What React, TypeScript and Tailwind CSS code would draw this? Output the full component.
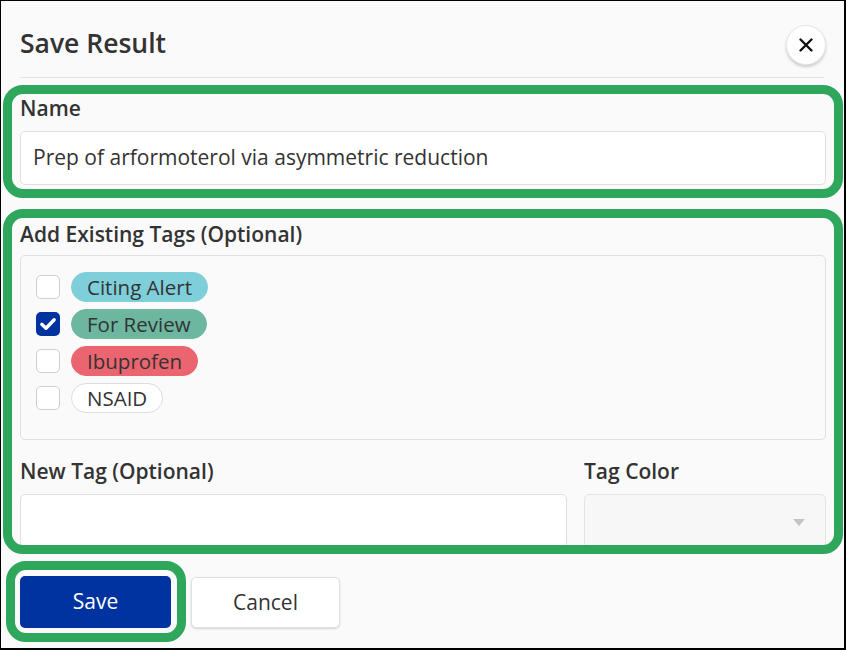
import React from "react";

const tags = [
  { name: "Citing Alert", cls: "bg-[#7fcfdb] border-[#7fcfdb]", checked: false },
  { name: "For Review", cls: "bg-[#6db7a1] border-[#6db7a1]", checked: true },
  { name: "Ibuprofen", cls: "bg-[#ea6570] border-[#ea6570]", checked: false },
  { name: "NSAID", cls: "bg-white border-[#dddddd]", checked: false },
];

function Checkbox({ checked }: { checked: boolean }) {
  if (checked) {
    return (
      <div className="w-6 h-6 rounded-[5px] bg-[#0033a0] flex items-center justify-center shrink-0">
        <svg width="18" height="18" viewBox="0 0 16 16" fill="none">
          <path d="M2.5 8.3 L6.2 11.8 L13.5 4.2" stroke="white" strokeWidth="3" strokeLinecap="round" strokeLinejoin="round" />
        </svg>
      </div>
    );
  }
  return <div className="w-6 h-6 rounded-[5px] bg-white border border-[#cfcfcf] shrink-0" />;
}

export default function App() {
  return (
    <div className="relative w-[846px] h-[650px] bg-[#fafafa] border-l border-t border-r-2 border-b-2 border-black overflow-hidden font-['Open_Sans',sans-serif] text-[#333333]">
      {/* Header */}
      <div className="flex items-center justify-between pl-[19px] pr-[18px] pt-[24px] h-[64px]">
        <h1 className="text-[26.5px] font-semibold leading-[32px] text-[#333333] -mt-[4px]">Save Result</h1>
        <button className="w-10 h-10 rounded-full bg-white border border-[#e6e6e6] shadow-[0_2px_3px_rgba(0,0,0,0.18)] flex items-center justify-center">
          <svg width="16" height="16" viewBox="0 0 16 16" fill="none">
            <path d="M2.5 2.5 L13.5 13.5 M13.5 2.5 L2.5 13.5" stroke="#111" strokeWidth="2.4" strokeLinecap="round" />
          </svg>
        </button>
      </div>
      <div className="ml-[19px] mr-5 mt-[12px] h-px bg-[#e2e2e2]" />

      {/* Body */}
      <div className="h-[469px] overflow-hidden pl-[19px] pt-[17px] pr-[18px]">
        <label className="block text-[21px] font-semibold leading-[26px]">Name</label>
        <div className="mt-[10px] h-[54px] bg-white border border-[#e0e0e0] rounded-[5px] px-3 flex items-center text-[21px]">
          Prep of arformoterol via asymmetric reduction
        </div>

        <label className="block mt-[36px] text-[21px] font-semibold leading-[26px]">Add Existing Tags (Optional)</label>
        <div className="mt-[8px] h-[185px] border border-[#e0e0e0] rounded-[5px] bg-[#fafafa] pt-[16px] pl-[15px] flex flex-col gap-[7px]">
          {tags.map((t) => (
            <div key={t.name} className="flex items-center gap-[11px] h-[30px]">
              <Checkbox checked={t.checked} />
              <span className={`h-[30px] px-[15px] rounded-full border flex items-center text-[20.5px] leading-none ${t.cls}`}>
                {t.name}
              </span>
            </div>
          ))}
        </div>

        <div className="mt-[18px] flex gap-[17px]">
          <div className="w-[547px]">
            <label className="block text-[21px] font-semibold leading-[26px]">New Tag (Optional)</label>
            <div className="mt-[10px] h-[54px] bg-white border border-[#e0e0e0] rounded-[5px]" />
          </div>
          <div className="flex-1">
            <label className="block text-[21px] font-semibold leading-[26px]">Tag Color</label>
            <div className="mt-[10px] h-[54px] bg-[#f7f7f7] border border-[#e3e3e3] rounded-[5px] flex items-center justify-end pr-[20px]">
              <svg width="12" height="7" viewBox="0 0 12 7" className="mt-[2px]">
                <path d="M0 0 L12 0 L6 7 Z" fill="#c4c4c4" />
              </svg>
            </div>
          </div>
        </div>
      </div>

      {/* Footer */}
      <div className="flex gap-5 pl-[19px] mt-[29px]">
        <button className="w-[151px] h-[52px] rounded-[5px] bg-[#0033a0] text-white text-[21px]">Save</button>
        <button className="w-[149px] h-[51px] mt-[1px] rounded-[5px] bg-white border border-[#e0e0e0] shadow-[0_1px_2px_rgba(0,0,0,0.15)] text-[21px] text-[#333333]">
          Cancel
        </button>
      </div>

      {/* Annotation overlays */}
      <div className="absolute left-[2px] top-[84px] w-[840px] h-[113px] border-[9px] border-[#2ea65c] rounded-[20px] pointer-events-none" />
      <div className="absolute left-[2px] top-[208px] w-[840px] h-[345px] border-[9px] border-[#2ea65c] rounded-[20px] pointer-events-none" />
      <div className="absolute left-[5px] top-[560px] w-[180px] h-[81px] border-[9px] border-[#2ea65c] rounded-[20px] pointer-events-none" />
    </div>
  );
}
